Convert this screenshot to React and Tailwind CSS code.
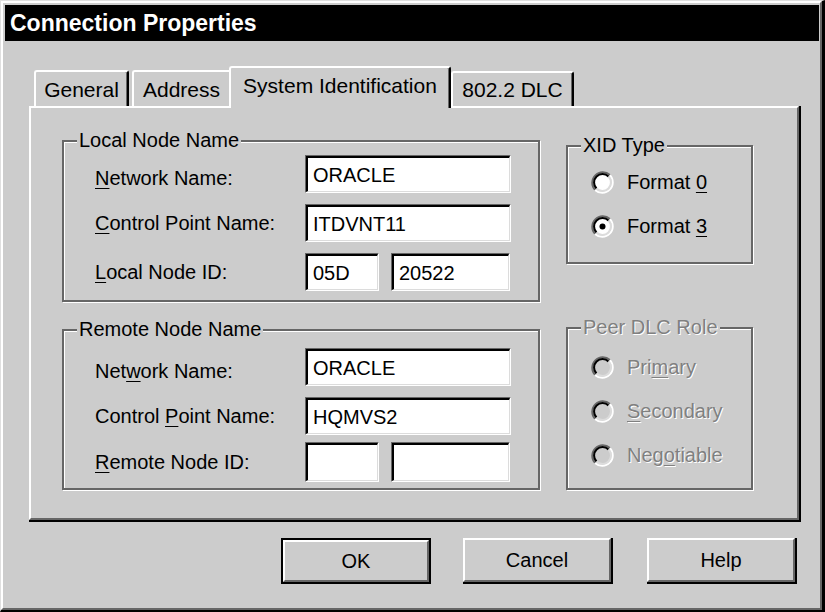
import React from "react";

// underlined mnemonic letter
function U({ children }) {
  return <span className="underline underline-offset-[3px] decoration-1">{children}</span>;
}

function Field({ value, className }) {
  return (
    <div
      className={`h-full border-t border-l border-r border-b border-t-[#666666] border-l-[#666666] border-r-white border-b-white ${className}`}
    >
      <div className="h-full bg-white border-t-2 border-l-2 border-r border-b border-t-black border-l-black border-r-[#dcdcdc] border-b-[#dcdcdc] pl-[5px] flex items-center text-[20px] leading-none">
        {value}
      </div>
    </div>
  );
}

function Radio({ checked, disabled }) {
  return (
    <svg width="23" height="23" viewBox="0 0 23 23" className="shrink-0">
      <circle cx="11.5" cy="11.5" r="8" fill={disabled ? "#cccccc" : "#ffffff"} />
      <path d="M4.08 18.92 A10.5 10.5 0 0 1 18.92 4.08" stroke="#666666" strokeWidth="2" fill="none" />
      <path d="M18.92 4.08 A10.5 10.5 0 0 1 4.08 18.92" stroke="#ffffff" strokeWidth="2" fill="none" />
      <path d="M5.49 17.51 A8.5 8.5 0 0 1 17.51 5.49" stroke="#000000" strokeWidth="2" fill="none" />
      <path d="M17.51 5.49 A8.5 8.5 0 0 1 5.49 17.51" stroke="#dcdcdc" strokeWidth="2" fill="none" />
      {checked && <circle cx="11.5" cy="11.5" r="3" fill="#000000" />}
    </svg>
  );
}

function Group({ legend, disabled, className, children }) {
  return (
    <div
      className={`relative border-2 border-[#666666] shadow-[inset_1px_1px_0_#ffffff,1px_1px_0_#ffffff] ${className}`}
    >
      <span
        className={`absolute left-[13px] -top-[14px] px-[2px] bg-[#cccccc] text-[20px] leading-[24px] whitespace-nowrap ${
          disabled ? "text-[#808080] [text-shadow:1px_1px_0_#ffffff]" : ""
        }`}
      >
        {legend}
      </span>
      {children}
    </div>
  );
}

function RadioRow({ checked, disabled, children }) {
  return (
    <div className="h-[30px] flex items-center gap-[13px]">
      <Radio checked={checked} disabled={disabled} />
      <span
        className={`text-[20px] leading-none ${
          disabled ? "text-[#808080] [text-shadow:1px_1px_0_#ffffff]" : ""
        }`}
      >
        {children}
      </span>
    </div>
  );
}

function Row({ label, children, className, labelClass = "" }) {
  return (
    <div className={`flex items-center ${className}`}>
      <div className={`w-[210px] text-[20px] leading-none whitespace-nowrap ${labelClass}`}>{label}</div>
      <div className="flex h-full">{children}</div>
    </div>
  );
}

function Button({ label, isDefault, className }) {
  return (
    <div
      className={`w-[150px] h-[46px] ${
        isDefault ? "border-2 border-black" : "border-r-2 border-b-2 border-r-black border-b-black"
      } ${className}`}
    >
      <div className="h-full border-2 border-t-white border-l-white border-r-[#666666] border-b-[#666666] flex items-center justify-center text-[20px] leading-none">
        {label}
      </div>
    </div>
  );
}

export default function App() {
  return (
    <div className="w-[825px] h-[612px] bg-[#cccccc] text-black font-['Liberation_Sans',Arial,sans-serif] flex border-l border-t border-r-[3px] border-b-2 border-l-[#dfdfdf] border-t-[#dfdfdf] border-r-black border-b-black">
      <div className="flex-1 flex flex-col pl-[2px] pt-[2px] pr-px border-l-2 border-t-2 border-r-2 border-b-2 border-l-white border-t-white border-r-[#666666] border-b-[#666666]">
        {/* title bar */}
        <div className="h-[36px] bg-black text-white font-bold text-[23px] leading-none flex items-center pl-[5px]">
          Connection Properties
        </div>

        {/* tabs */}
        <div className="relative z-10 mt-[25px] ml-[24px] pl-[5px] h-[40px] flex items-end text-[21px] leading-none">
          <div className="w-[95px] h-[36px] flex items-center justify-center rounded-t-[3px] border-t-2 border-l-2 border-r-2 border-t-white border-l-white border-r-black shadow-[inset_-1px_0_0_#666666]">
            General
          </div>
          <div className="ml-[3px] w-[97px] h-[36px] flex items-center justify-center rounded-tl-[3px] border-t-2 border-l-2 border-t-white border-l-white">
            Address
          </div>
          <div className="w-[222px] h-[42px] -mb-[2px] bg-[#cccccc] flex items-center justify-center pb-[6px] rounded-t-[3px] border-t-2 border-l-2 border-r-2 border-t-white border-l-white border-r-black shadow-[inset_-1px_0_0_#666666]">
            System Identification
          </div>
          <div className="w-[123px] h-[35px] flex items-center justify-center rounded-t-[3px] border-t-2 border-l-2 border-r-2 border-t-white border-l-white border-r-black shadow-[inset_-1px_0_0_#666666]">
            802.2 DLC
          </div>
        </div>

        {/* tab panel */}
        <div className="ml-[24px] w-[772px] h-[416px] border-r-2 border-b-2 border-r-black border-b-black">
          <div className="h-full flex pl-[31px] pt-[32px] border-t-2 border-l-2 border-r-2 border-b-2 border-t-white border-l-white border-r-[#666666] border-b-[#666666]">
            <div className="w-[478px] flex flex-col">
              <Group legend="Local Node Name" className="h-[162px] pl-[31px] pt-[13px] flex flex-col gap-[11px]">
                <Row label={<><U>N</U>etwork Name:</>} className="h-[38px]" labelClass="pt-[8px]">
                  <Field value="ORACLE" className="w-[206px]" />
                </Row>
                <Row label={<><U>C</U>ontrol Point Name:</>} className="h-[38px]">
                  <Field value="ITDVNT11" className="w-[206px]" />
                </Row>
                <Row label={<><U>L</U>ocal Node ID:</>} className="h-[38px]">
                  <Field value="05D" className="w-[74px]" />
                  <Field value="20522" className="w-[119px] ml-[12px]" />
                </Row>
              </Group>

              <Group legend="Remote Node Name" className="mt-[27px] h-[161px] pl-[31px] pt-[17px] flex flex-col">
                <Row label={<>Net<U>w</U>ork Name:</>} className="h-[38px]" labelClass="pt-[8px]">
                  <Field value="ORACLE" className="w-[206px]" />
                </Row>
                <Row label={<>Control <U>P</U>oint Name:</>} className="h-[38px] mt-[11px]">
                  <Field value="HQMVS2" className="w-[206px]" />
                </Row>
                <Row label={<><U>R</U>emote Node ID:</>} className="h-[40px] mt-[7px]">
                  <Field value="" className="w-[74px]" />
                  <Field value="" className="w-[119px] ml-[12px]" />
                </Row>
              </Group>
            </div>

            <div className="ml-[26px] w-[187px] flex flex-col">
              <Group legend="XID Type" className="mt-[5px] h-[119px] pl-[23px] pt-[20px] flex flex-col gap-[14px]">
                <RadioRow>
                  Format <U>0</U>
                </RadioRow>
                <RadioRow checked>
                  Format <U>3</U>
                </RadioRow>
              </Group>

              <Group legend="Peer DLC Role" disabled className="mt-[63px] h-[163px] pl-[23px] pt-[23px] flex flex-col gap-[14px]">
                <RadioRow disabled>
                  Pri<U>m</U>ary
                </RadioRow>
                <RadioRow disabled>
                  <U>S</U>econdary
                </RadioRow>
                <RadioRow disabled>
                  Neg<U>o</U>tiable
                </RadioRow>
              </Group>
            </div>
          </div>
        </div>

        {/* buttons */}
        <div className="mt-[16px] flex">
          <Button label="OK" isDefault className="ml-[276px]" />
          <Button label="Cancel" className="ml-[32px]" />
          <Button label="Help" className="ml-[34px]" />
        </div>
      </div>
    </div>
  );
}
